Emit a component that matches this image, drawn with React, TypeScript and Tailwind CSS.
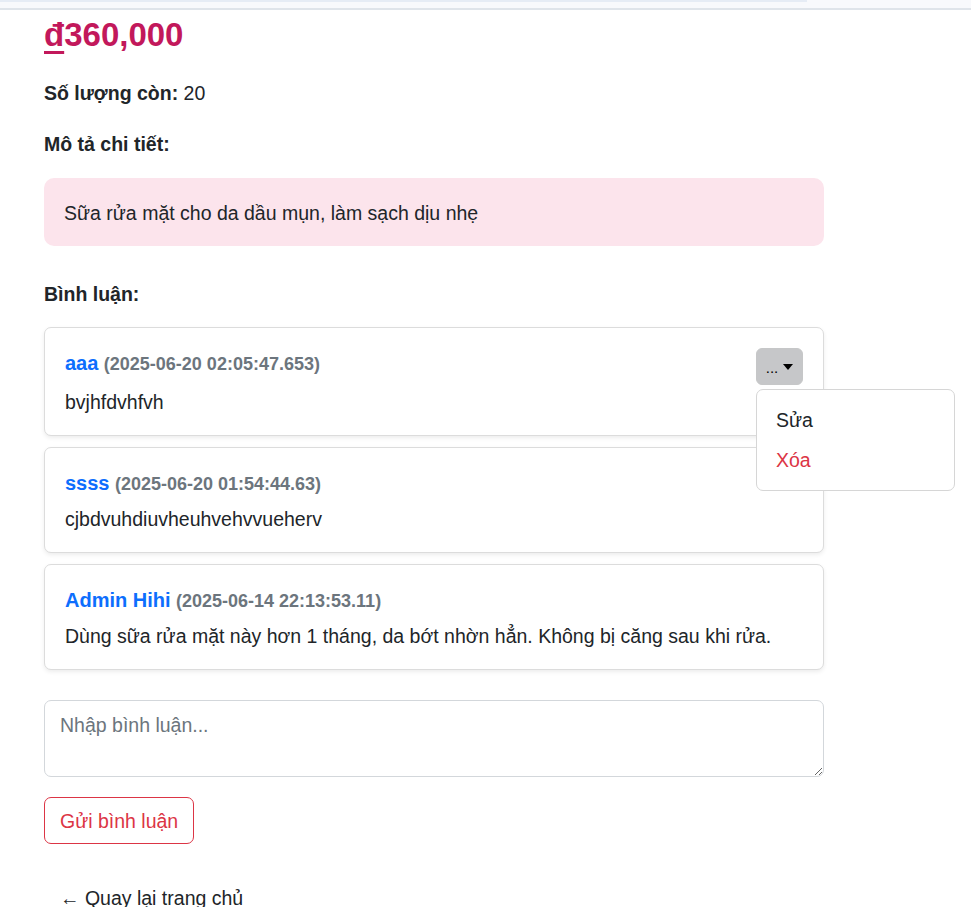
import React, { useState } from 'react';

interface Comment {
  id: number;
  user: string;
  time: string;
  content: string;
}

const comments: Comment[] = [
  { id: 1, user: 'aaa', time: '2025-06-20 02:05:47.653', content: 'bvjhfdvhfvh' },
  { id: 2, user: 'ssss', time: '2025-06-20 01:54:44.63', content: 'cjbdvuhdiuvheuhvehvvueherv' },
  {
    id: 3,
    user: 'Admin Hihi',
    time: '2025-06-14 22:13:53.11',
    content: 'Dùng sữa rửa mặt này hơn 1 tháng, da bớt nhờn hẳn. Không bị căng sau khi rửa.'
  }
];

const CommentCard: React.FC<{ comment: Comment; canEdit: boolean }> = ({ comment, canEdit }) => {
  const [menuOpen, setMenuOpen] = useState(true);

  return (
    <div className="rounded-[7px] border border-[#dcdcdc] bg-white px-[20px] pt-[20px] pb-[18px] shadow-[0_2px_4px_rgba(0,0,0,0.075)]">
      <div className="flex items-start justify-between">
        <div className="h-[34px] leading-[30px]">
          <span className="text-[20px] font-bold text-[#0d6efd]">{comment.user}</span>{' '}
          <span className="text-[18px] font-bold text-[#6c757d]">({comment.time})</span>
        </div>
        {canEdit && (
          <div className="relative">
            <button
              onClick={() => setMenuOpen(!menuOpen)}
              className="flex h-[37px] w-[47px] items-center justify-center rounded-[6px] border border-[#c6c7c8] bg-[#c6c7c9] text-[15px] text-black"
            >
              <span className="mt-[2px] leading-none">...</span>
              <span className="ml-[5px] h-0 w-0 border-x-[5px] border-t-[6px] border-x-transparent border-t-black" />
            </button>
            {menuOpen && (
              <div className="absolute left-0 top-[calc(100%+4px)] z-10 w-[199px] rounded-[7px] border border-[#d6d6d6] bg-white py-[10px]">
                <div className="px-[19px] py-[5px] leading-[30px] text-[#212529]">Sửa</div>
                <div className="px-[19px] py-[5px] leading-[30px] text-[#dc3545]">Xóa</div>
              </div>
            )}
          </div>
        )}
      </div>
      <div className="mt-[2px] leading-[30px] text-[#212529]">{comment.content}</div>
    </div>
  );
};

const App: React.FC = () => {
  const [text, setText] = useState('');

  return (
    <div className="min-h-screen bg-white font-['Liberation_Sans',Arial,sans-serif] text-[19.5px] leading-[30px] text-[#212529]">
      {/* strip left from the header above */}
      <div className="h-[10px] border-b-2 border-[#dfe4ea] bg-[#f8f9fc]">
        <div className="h-[2px] w-[807px] bg-[#e6ecf5]" />
      </div>

      <div className="w-[824px] pl-[44px]">
        <h3 className="mt-[4px] text-[33px] font-bold leading-[42px] text-[#c2185b]">
          <span className="underline decoration-[3px] underline-offset-[5px]">đ</span>360,000
        </h3>

        <p className="mt-[22px]">
          <span className="font-bold">Số lượng còn:</span> 20
        </p>

        <p className="mt-[21px] font-bold">Mô tả chi tiết:</p>

        <div className="mt-[19px] rounded-[10px] bg-[#fce4ec] px-[20px] pt-[20px] pb-[18px]">
          Sữa rửa mặt cho da dầu mụn, làm sạch dịu nhẹ
        </div>

        <p className="mt-[33px] font-bold">Bình luận:</p>

        <div className="mt-[18px] flex flex-col gap-[11px]">
          {comments.map((c, i) => (
            <CommentCard key={c.id} comment={c} canEdit={i === 0} />
          ))}
        </div>

        <textarea
          value={text}
          onChange={(e) => setText(e.target.value)}
          placeholder="Nhập bình luận..."
          className="mt-[30px] block h-[77px] w-full rounded-[7px] border border-[#d3d7db] px-[15px] py-[9px] leading-[30px] text-[#212529] outline-none placeholder:text-[#6c757d]"
        />

        <button className="mt-[20px] rounded-[7px] border border-[#dc3545] px-[15px] pt-[8px] pb-[7px] leading-[30px] text-[#dc3545]">
          Gửi bình luận
        </button>

        <div className="mt-[32px]">
          <a href="#" className="inline-block px-[16px] py-[7px] text-[#212529]">
            ← Quay lại trang chủ
          </a>
        </div>
      </div>
    </div>
  );
};

export default App;
